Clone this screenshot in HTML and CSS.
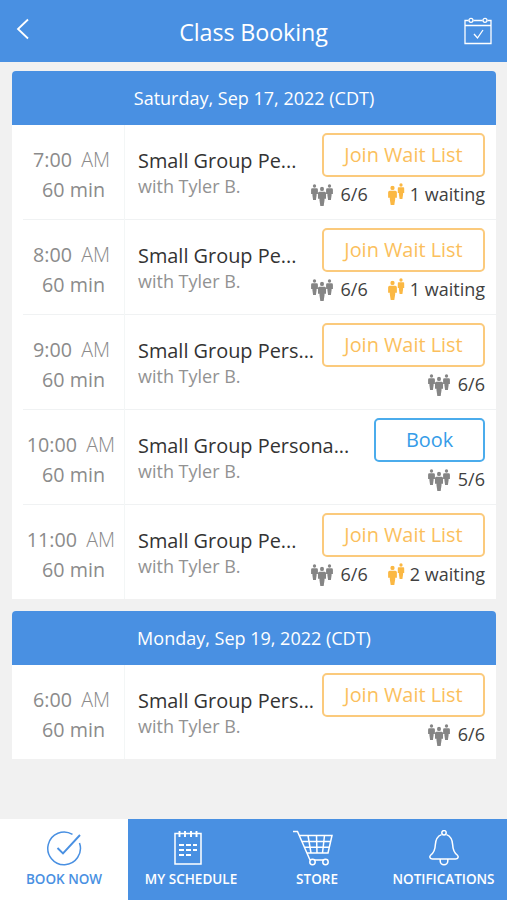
FILE: index.html
```
<!DOCTYPE html>
<html lang="en">
<head>
<meta charset="utf-8">
<title>Class Booking</title>
<link rel="stylesheet" href="styles.css">
</head>
<body>
<svg class="defs" aria-hidden="true">
  <symbol id="person" viewBox="0 0 8 17" preserveAspectRatio="none"><circle cx="4" cy="2.100" r="1.900"/><path d="M1.500 4.600h5Q7.900 4.600 7.900 6v4.600H6.400V12L5.600 17H2.400L1.600 12v-1.400H.1V6Q.1 4.600 1.500 4.600z"/></symbol>
  <symbol id="group" viewBox="0 0 22 22"><use href="#person" x="0" y="0" width="7" height="16"/><use href="#person" x="15" y="0" width="7" height="16"/><use href="#person" x="6.800" y="2.500" width="8.400" height="19.500"/></symbol>
  <symbol id="pair" viewBox="0 0 17 22"><use href="#person" x="0" y="2.500" width="9" height="19.500"/><use href="#person" x="9.500" y="0" width="7" height="16"/></symbol>
</svg>
<div class="app">
  <header class="topbar">
    <svg class="back" viewBox="0 0 14 22"><path d="M12 1.500 2 11l10 9.500"/></svg>
    <h1>Class Booking</h1>
    <svg class="cal" viewBox="0 0 28 28"><path d="M4.500 3.500H1v23h26v-23h-3.500M9.500 3.500h9M1 8.500h26M10 17l3.500 4 5.500-8"/><circle cx="7" cy="3.300" r="2"/><circle cx="21" cy="3.300" r="2"/></svg>
  </header>
  <main>
    <section class="day">
      <h2>Saturday, Sep 17, 2022 (CDT)</h2>
      <article class="row">
        <div class="time"><p class="hour">7:00 <span>AM</span></p><p class="length">60 min</p></div>
        <div class="info"><h3>Small Group Pe...</h3><p>with Tyler B.</p></div>
        <div class="side"><button>Join Wait List</button><div class="stats"><svg class="group"><use href="#group"/></svg><span>6/6</span><svg class="pair"><use href="#pair"/></svg><span class="waiting">1 waiting</span></div></div>
      </article>
      <article class="row">
        <div class="time"><p class="hour">8:00 <span>AM</span></p><p class="length">60 min</p></div>
        <div class="info"><h3>Small Group Pe...</h3><p>with Tyler B.</p></div>
        <div class="side"><button>Join Wait List</button><div class="stats"><svg class="group"><use href="#group"/></svg><span>6/6</span><svg class="pair"><use href="#pair"/></svg><span class="waiting">1 waiting</span></div></div>
      </article>
      <article class="row">
        <div class="time"><p class="hour">9:00 <span>AM</span></p><p class="length">60 min</p></div>
        <div class="info"><h3>Small Group Pers...</h3><p>with Tyler B.</p></div>
        <div class="side"><button>Join Wait List</button><div class="stats"><svg class="group"><use href="#group"/></svg><span>6/6</span></div></div>
      </article>
      <article class="row">
        <div class="time"><p class="hour wide">10:00 <span>AM</span></p><p class="length">60 min</p></div>
        <div class="info"><h3>Small Group Persona...</h3><p>with Tyler B.</p></div>
        <div class="side"><button class="book">Book</button><div class="stats"><svg class="group"><use href="#group"/></svg><span>5/6</span></div></div>
      </article>
      <article class="row">
        <div class="time"><p class="hour wide">11:00 <span>AM</span></p><p class="length">60 min</p></div>
        <div class="info"><h3>Small Group Pe...</h3><p>with Tyler B.</p></div>
        <div class="side"><button>Join Wait List</button><div class="stats"><svg class="group"><use href="#group"/></svg><span>6/6</span><svg class="pair"><use href="#pair"/></svg><span class="waiting">2 waiting</span></div></div>
      </article>
    </section>
    <section class="day">
      <h2>Monday, Sep 19, 2022 (CDT)</h2>
      <article class="row">
        <div class="time"><p class="hour">6:00 <span>AM</span></p><p class="length">60 min</p></div>
        <div class="info"><h3>Small Group Pers...</h3><p>with Tyler B.</p></div>
        <div class="side"><button>Join Wait List</button><div class="stats"><svg class="group"><use href="#group"/></svg><span>6/6</span></div></div>
      </article>
    </section>
  </main>
  <nav>
    <a class="active"><svg viewBox="0 0 36 36"><path d="M26.500 4.400A16.300 16.300 0 1 0 33.500 13"/><path class="heavy" d="m11.500 18 5.500 5.500L34 5"/></svg><span>BOOK NOW</span></a>
    <a><svg class="pad" viewBox="0 0 36 36"><path d="M5 3.500h26V34H5z"/><path class="heavy" d="M9.500 1v6M15 1v6M21 1v6M26.500 1v6"/><path class="heavy" d="M9 15h5M16 15h5M23 15h4M9 20h5M16 20h5M23 20h4M9 25h5M16 25h5"/></svg><span>MY SCHEDULE</span></a>
    <a><svg class="cart" viewBox="0 0 42 36"><path d="M1 1.500h4.500L18 30M7.500 5.500H40l-4 17.500H14.800M10 11.500h28.500M12.500 17.300h25M16 5.500 19 23M24.500 5.500 25 23M32.500 5.500 30.500 23M22 30h9"/><circle cx="20.500" cy="32" r="2.700"/><circle cx="33.500" cy="32" r="2.700"/></svg><span>STORE</span></a>
    <a><svg viewBox="0 0 36 36"><circle cx="18" cy="2.800" r="2.200"/><path d="M15.500 4.600C10.500 6.500 9.500 10.500 9.300 15c-.2 5-1.300 7.500-4.500 10-2 1.800-.8 4 1.700 4h23c2.500 0 3.700-2.200 1.700-4-3.200-2.500-4.300-5-4.500-10-.2-4.500-1.200-8.500-6.200-10.400M14.200 29v2a3.800 3.800 0 0 0 7.600 0v-2"/></svg><span>NOTIFICATIONS</span></a>
  </nav>
</div>
</body>
</html>
```
FILE: styles.css
```
* { box-sizing: border-box; }
body, h1, h2, h3, p { margin: 0; font-weight: 400; }
body { font-family: "Open Sans", sans-serif; background: #f1f1f1; }
svg { display: block; flex: none; }
.defs { display: none; }
.app { height: 900px; display: flex; flex-direction: column; overflow: hidden; }

.topbar { height: 62px; flex: none; background: #4990e2; color: #fff; display: grid; grid-template-columns: 60px 1fr 60px; }
.topbar h1 { font-size: 23.300px; line-height: 64px; text-align: center; letter-spacing: -.1px; white-space: nowrap; }
.topbar svg { fill: none; stroke: #fff; }
.back { width: 14px; height: 22px; margin: 18px 0 0 16px; stroke-width: 1.800; }
.cal { width: 28px; height: 28px; margin: 17px 0 0 17px; stroke-width: 1.300; }

main { flex: 1; padding: 9px 11px 0 12px; }
.day { background: #fff; border-radius: 4px 4px 0 0; margin-bottom: 12px; overflow: hidden; }
.day h2 { height: 54px; background: #4990e2; color: #fff; text-align: center; font-size: 18px; line-height: 54px; }
.row { height: 95px; display: grid; grid-template-columns: 113px 1fr auto; background: linear-gradient(#f0f2f3, #f0f2f3) 11px 100% / 100% 1px no-repeat; }
.row:last-child { height: 94px; background: none; }
.time { border-right: 1px solid #f3f6f6; padding-top: 21px; text-align: right; color: #8b8b8b; font-size: 19.700px; line-height: 28px; white-space: nowrap; }
.hour { padding-right: 14px; }
.hour.wide { padding-right: 9px; }
.hour span { font-weight: 300; margin-left: 4px; }
.length { padding-right: 19px; margin-top: 2px; }
.info { padding: 22px 0 0 13px; min-width: 0; white-space: nowrap; }
.info h3 { font-size: 19.900px; line-height: 27px; color: #333; }
.info p { font-size: 18px; line-height: 24px; color: #929292; }
.side { padding: 8px 11px 0 0; display: flex; flex-direction: column; align-items: flex-end; }
button { width: 163px; height: 44px; padding: 0; border: 2px solid #fbca7c; border-radius: 5px; background: #fff; color: #fbbf5d; font: 400 19.900px/40px "Open Sans", sans-serif; }
.book { width: 111px; border-color: #4bacec; color: #359ce8; }
.stats { display: flex; align-items: center; height: 24px; margin-top: 5px; font-size: 18px; line-height: 24px; color: #404040; white-space: nowrap; }
.group { width: 22px; height: 22px; fill: #858585; margin: 1px 8px 0 0; }
.pair { width: 17px; height: 22px; fill: #fbb843; margin: 0 5px 0 20px; }

nav { height: 81px; flex: none; display: grid; grid-template-columns: 128px 126px 126px 127px; background: #4990e2; color: #fff; }
nav a { display: flex; flex-direction: column; align-items: center; padding-top: 11px; font-size: 13.500px; font-weight: 600; line-height: 18px; white-space: nowrap; }
nav svg { width: 36px; height: 36px; margin-bottom: 4px; fill: none; stroke: currentColor; stroke-width: 1.500; }
nav .pad { margin-right: 7px; }
nav .cart { width: 42px; margin-right: 8px; }
nav .heavy { stroke-width: 1.900; }
nav .active { background: #fff; color: #4990e2; }
```
